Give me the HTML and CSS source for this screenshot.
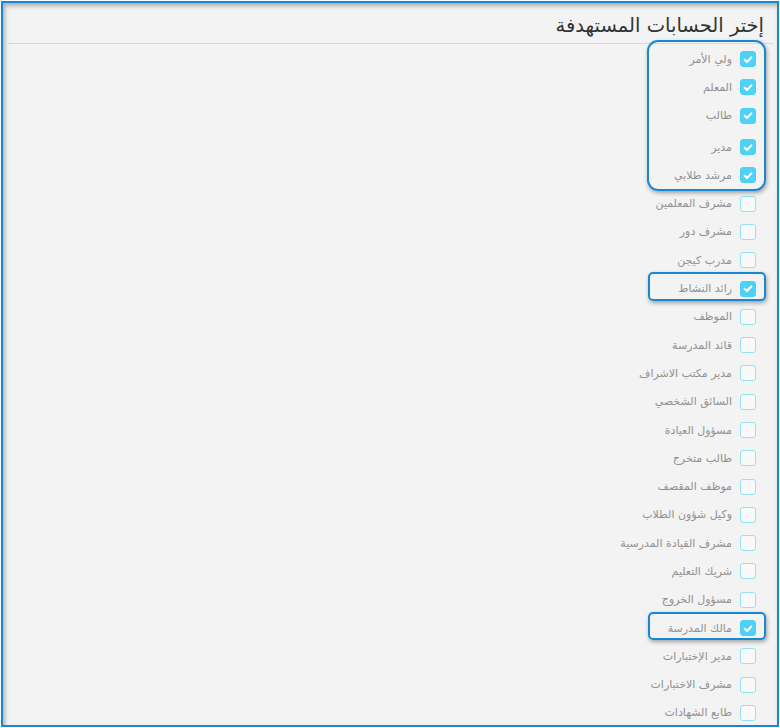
FILE: index.html
```html
<!DOCTYPE html>
<html lang="ar" dir="rtl">
<head>
  <meta charset="utf-8" />
  <title>إختر الحسابات المستهدفة</title>
  <link rel="stylesheet" href="styles.css">
</head>
<body>
  <div class="panel">
    <h2 class="title">إختر الحسابات المستهدفة</h2>

    <div class="list">
      <div class="group group-big">
        <label class="item"><span class="box checked"><svg viewBox="0 0 16 16"><path d="M4.2 8.4l2.6 2.5 5-5.2" /></svg></span><span class="text">ولي الأمر</span></label>
        <label class="item"><span class="box checked"><svg viewBox="0 0 16 16"><path d="M4.2 8.4l2.6 2.5 5-5.2" /></svg></span><span class="text">المعلم</span></label>
        <label class="item"><span class="box checked"><svg viewBox="0 0 16 16"><path d="M4.2 8.4l2.6 2.5 5-5.2" /></svg></span><span class="text">طالب</span></label>
        <label class="item item-shift"><span class="box checked"><svg viewBox="0 0 16 16"><path d="M4.2 8.4l2.6 2.5 5-5.2" /></svg></span><span class="text">مدير</span></label>
        <label class="item"><span class="box checked"><svg viewBox="0 0 16 16"><path d="M4.2 8.4l2.6 2.5 5-5.2" /></svg></span><span class="text">مرشد طلابي</span></label>
      </div>

      <label class="item"><span class="box"></span><span class="text">مشرف المعلمين</span></label>
      <label class="item"><span class="box"></span><span class="text">مشرف دور</span></label>
      <label class="item"><span class="box"></span><span class="text">مدرب كيجن</span></label>

      <div class="group">
        <label class="item"><span class="box checked"><svg viewBox="0 0 16 16"><path d="M4.2 8.4l2.6 2.5 5-5.2" /></svg></span><span class="text">رائد النشاط</span></label>
      </div>

      <label class="item"><span class="box"></span><span class="text">الموظف</span></label>
      <label class="item"><span class="box"></span><span class="text">قائد المدرسة</span></label>
      <label class="item"><span class="box"></span><span class="text">مدير مكتب الاشراف</span></label>
      <label class="item"><span class="box"></span><span class="text">السائق الشخصي</span></label>
      <label class="item"><span class="box"></span><span class="text">مسؤول العيادة</span></label>
      <label class="item"><span class="box"></span><span class="text">طالب متخرج</span></label>
      <label class="item"><span class="box"></span><span class="text">موظف المقصف</span></label>
      <label class="item"><span class="box"></span><span class="text">وكيل شؤون الطلاب</span></label>
      <label class="item"><span class="box"></span><span class="text">مشرف القيادة المدرسية</span></label>
      <label class="item"><span class="box"></span><span class="text">شريك التعليم</span></label>
      <label class="item"><span class="box"></span><span class="text">مسؤول الخروج</span></label>

      <div class="group">
        <label class="item"><span class="box checked"><svg viewBox="0 0 16 16"><path d="M4.2 8.4l2.6 2.5 5-5.2" /></svg></span><span class="text">مالك المدرسة</span></label>
      </div>

      <label class="item"><span class="box"></span><span class="text">مدير الإختبارات</span></label>
      <label class="item"><span class="box"></span><span class="text">مشرف الاختبارات</span></label>
      <label class="item"><span class="box"></span><span class="text">طابع الشهادات</span></label>
    </div>
  </div>
</body>
</html>
```

FILE: styles.css
```css
:root {
  --blue: #1788d4;
  --check: #4fd1f6;
  --check-border: #8fe2f7;
  --row: 28.3px;
}

*, *::before, *::after {
  box-sizing: border-box;
}

html, body {
  margin: 0;
  height: 728px;
  overflow: hidden;
  background: #ffffff;
}

body {
  font-family: "DejaVu Sans", "Noto Sans", sans-serif;
  padding: 1px;
}

.panel {
  height: 726px;
  border: 2px solid var(--blue);
  background: #f3f3f3;
  box-shadow: inset 2px 3px 4px rgba(0, 0, 0, 0.28);
}

/* Title */
.title {
  margin: 0 3px 0 5px;
  height: 41px;
  padding: 10px 10px 0 0;
  border-bottom: 1px solid #d9d9d9;
  font-size: 19.5px;
  font-weight: normal;
  color: #333;
  line-height: 26px;
}

/* Checkbox list */
.list {
  display: flex;
  flex-direction: column;
  align-items: flex-start;
  padding: 1px 11px 0 0;
}

.item {
  display: flex;
  align-items: center;
  gap: 8px;
  height: var(--row);
  padding-right: 10px;
  cursor: pointer;
}

.item-shift {
  margin-top: 3px;
}

.box {
  display: flex;
  align-items: center;
  justify-content: center;
  width: 16px;
  height: 16px;
  border: 1.5px solid var(--check-border);
  border-radius: 3px;
  background: #f9f9f9;
  flex-shrink: 0;
}

.box.checked {
  background: var(--check);
  border-color: var(--check);
}

.box svg {
  width: 15px;
  height: 15px;
}

.box svg path {
  fill: none;
  stroke: #fff;
  stroke-width: 2.4;
  stroke-linecap: round;
  stroke-linejoin: round;
}

.text {
  font-size: 11px;
  color: #919191;
  white-space: nowrap;
}

/* Highlight frames */
.group {
  position: relative;
  width: 118px;
}

.group::after {
  content: "";
  position: absolute;
  top: -2px;
  bottom: 2px;
  left: 0;
  right: 0;
  border: 2px solid var(--blue);
  border-radius: 5px;
  box-shadow: 1px 2px 4px rgba(0, 0, 0, 0.35);
  pointer-events: none;
}

.group-big {
  width: 119px;
}

.group-big::after {
  top: -5px;
  bottom: -2px;
  border-radius: 11px;
}
```
